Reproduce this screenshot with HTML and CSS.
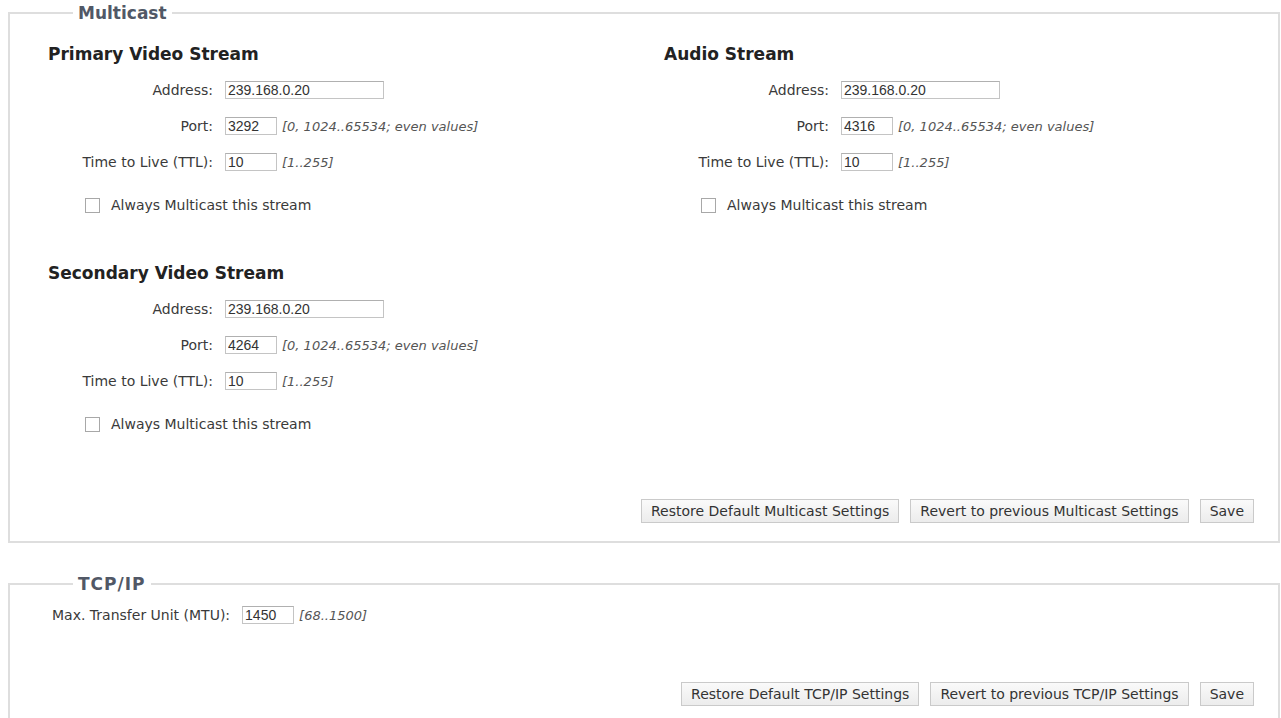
FILE: index.html
```html
<!DOCTYPE html>
<html lang="en">
<head>
    <meta charset="UTF-8">
    <meta name="viewport" content="width=device-width, initial-scale=1.0">
    <title>Network Settings</title>
    <link rel="stylesheet" href="styles.css">
</head>
<body>

    <!-- Multicast settings -->
    <fieldset class="panel">
        <legend>Multicast</legend>

        <div class="streams">
            <div class="col">
                <section class="stream">
                    <h3>Primary Video Stream</h3>
                    <div class="row">
                        <label for="pv-addr">Address:</label>
                        <input type="text" id="pv-addr" class="wide" value="239.168.0.20">
                    </div>
                    <div class="row">
                        <label for="pv-port">Port:</label>
                        <input type="text" id="pv-port" class="short" value="3292">
                        <span class="hint">[0, 1024..65534; even values]</span>
                    </div>
                    <div class="row">
                        <label for="pv-ttl">Time to Live (TTL):</label>
                        <input type="text" id="pv-ttl" class="short" value="10">
                        <span class="hint">[1..255]</span>
                    </div>
                    <div class="check">
                        <input type="checkbox" id="pv-always">
                        <label for="pv-always">Always Multicast this stream</label>
                    </div>
                </section>

                <section class="stream">
                    <h3>Secondary Video Stream</h3>
                    <div class="row">
                        <label for="sv-addr">Address:</label>
                        <input type="text" id="sv-addr" class="wide" value="239.168.0.20">
                    </div>
                    <div class="row">
                        <label for="sv-port">Port:</label>
                        <input type="text" id="sv-port" class="short" value="4264">
                        <span class="hint">[0, 1024..65534; even values]</span>
                    </div>
                    <div class="row">
                        <label for="sv-ttl">Time to Live (TTL):</label>
                        <input type="text" id="sv-ttl" class="short" value="10">
                        <span class="hint">[1..255]</span>
                    </div>
                    <div class="check">
                        <input type="checkbox" id="sv-always">
                        <label for="sv-always">Always Multicast this stream</label>
                    </div>
                </section>
            </div>

            <div class="col">
                <section class="stream">
                    <h3>Audio Stream</h3>
                    <div class="row">
                        <label for="au-addr">Address:</label>
                        <input type="text" id="au-addr" class="wide" value="239.168.0.20">
                    </div>
                    <div class="row">
                        <label for="au-port">Port:</label>
                        <input type="text" id="au-port" class="short" value="4316">
                        <span class="hint">[0, 1024..65534; even values]</span>
                    </div>
                    <div class="row">
                        <label for="au-ttl">Time to Live (TTL):</label>
                        <input type="text" id="au-ttl" class="short" value="10">
                        <span class="hint">[1..255]</span>
                    </div>
                    <div class="check">
                        <input type="checkbox" id="au-always">
                        <label for="au-always">Always Multicast this stream</label>
                    </div>
                </section>
            </div>
        </div>

        <div class="actions multicast-actions">
            <button type="button">Restore Default Multicast Settings</button>
            <button type="button">Revert to previous Multicast Settings</button>
            <button type="button">Save</button>
        </div>
    </fieldset>

    <!-- TCP/IP settings -->
    <fieldset class="panel">
        <legend class="spaced">TCP/IP</legend>

        <div class="row mtu">
            <label for="mtu">Max. Transfer Unit (MTU):</label>
            <input type="text" id="mtu" class="short" value="1450">
            <span class="hint">[68..1500]</span>
        </div>

        <div class="actions tcp-actions">
            <button type="button">Restore Default TCP/IP Settings</button>
            <button type="button">Revert to previous TCP/IP Settings</button>
            <button type="button">Save</button>
        </div>
    </fieldset>

</body>
</html>
```

FILE: styles.css
```css
body {
    margin: 3px 1px 0 8px;
    background-color: #fff;
    font-family: "DejaVu Sans", Verdana, sans-serif;
    font-size: 14px;
    color: #3a3a3a;
}

.panel {
    margin: 0;
    min-width: 0;
    padding: 11px 24px 18px 38px;
    border: 2px solid #dedede;
}

.panel + .panel {
    margin-top: 31px;
}

.panel legend {
    margin-left: 25px;
    padding: 0 5px;
    font-size: 17px;
    line-height: 20px;
    font-weight: bold;
    color: #515866;
}

.panel legend.spaced {
    letter-spacing: 1px;
}

.streams {
    display: grid;
    grid-template-columns: 616px 1fr;
}

.stream + .stream {
    margin-top: 48px;
}

.stream h3 {
    margin: 10px 0 0;
    font-size: 17px;
    line-height: 20px;
    font-weight: bold;
    color: #222;
}

.row {
    display: flex;
    align-items: center;
    height: 20px;
    margin-top: 16px;
}

.row label {
    width: 165px;
    margin-right: 12px;
    text-align: right;
    white-space: nowrap;
}

input[type="text"] {
    box-sizing: border-box;
    height: 18px;
    margin: 0;
    padding: 0 2px;
    border: 1px solid #c4c4c4;
    border-top-color: #b0b0b0;
    font-family: "Liberation Sans", Arial, sans-serif;
    font-size: 14px;
    color: #333;
    background-color: #fff;
}

input.wide {
    width: 159px;
}

input.short {
    width: 52px;
}

.hint {
    margin-left: 5px;
    font-size: 13px;
    font-style: italic;
    color: #555;
    white-space: nowrap;
}

.check {
    display: flex;
    align-items: center;
    height: 20px;
    margin-top: 23px;
    padding-left: 37px;
}

.check input {
    appearance: none;
    width: 15px;
    height: 15px;
    margin: 0 11px 0 0;
    border: 1px solid #a8a8a8;
    background-color: #fff;
}

.mtu {
    margin-top: 0;
    margin-left: 4px;
}

.mtu label {
    width: auto;
}

.actions {
    display: flex;
    justify-content: flex-end;
    gap: 11px;
}

.multicast-actions {
    margin-top: 65px;
}

.tcp-actions {
    margin-top: 57px;
}

.actions button {
    height: 24px;
    padding: 0 9px;
    border: 1px solid #cacaca;
    background: linear-gradient(#fafafa, #ececec);
    font-family: "DejaVu Sans", Verdana, sans-serif;
    font-size: 14px;
    color: #333;
    cursor: pointer;
}

.actions button:hover {
    background: #e6e6e6;
}
```
